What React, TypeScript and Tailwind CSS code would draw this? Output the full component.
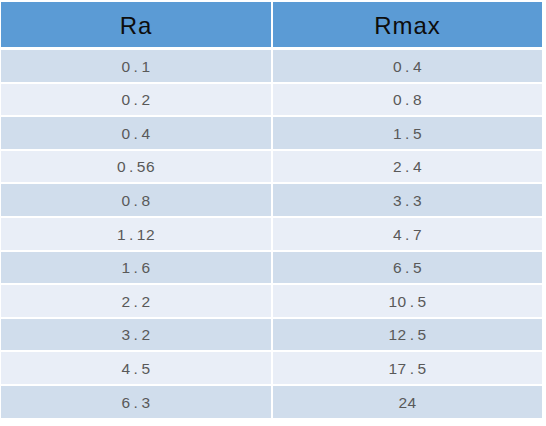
const rows: [string, string][] = [
  ["0.1", "0.4"],
  ["0.2", "0.8"],
  ["0.4", "1.5"],
  ["0.56", "2.4"],
  ["0.8", "3.3"],
  ["1.12", "4.7"],
  ["1.6", "6.5"],
  ["2.2", "10.5"],
  ["3.2", "12.5"],
  ["4.5", "17.5"],
  ["6.3", "24"],
];

function Num({ v }: { v: string }) {
  const parts = v.split(".");
  if (parts.length === 1) return <span>{v}</span>;
  return (
    <span>
      {parts[0]}
      <span className="px-[3px]">.</span>
      {parts[1]}
    </span>
  );
}

export default function App() {
  return (
    <div
      className="w-[546px] h-[426px] bg-white pt-[2px] pl-[1px]"
      style={{ fontFamily: '"Liberation Sans", Arial, sans-serif' }}
    >
      <div className="w-[541px] flex flex-col">
        <div className="grid grid-cols-[270px_269px] gap-x-[2px] h-[45px] mb-[3px]">
          <div className="bg-[#5b9bd5] flex items-center justify-center text-[24px] tracking-[1px] text-[#0d0d0d] pt-[2px]">Ra</div>
          <div className="bg-[#5b9bd5] flex items-center justify-center text-[24px] tracking-[1px] text-[#0d0d0d] pt-[2px]">Rmax</div>
        </div>
        <div className="flex flex-col gap-y-[2px]">
          {rows.map(([a, b], i) => {
            const bg = i % 2 === 0 ? "bg-[#d0ddec]" : "bg-[#e9eef7]";
            return (
              <div key={i} className="grid grid-cols-[270px_269px] gap-x-[2px] h-[31.6px]">
                <div className={`${bg} flex items-center justify-center text-[15.5px] text-[#595959] tracking-[0.5px] pt-[1px]`}>
                  <Num v={a} />
                </div>
                <div className={`${bg} flex items-center justify-center text-[15.5px] text-[#595959] tracking-[0.5px] pt-[1px]`}>
                  <Num v={b} />
                </div>
              </div>
            );
          })}
        </div>
      </div>
    </div>
  );
}
